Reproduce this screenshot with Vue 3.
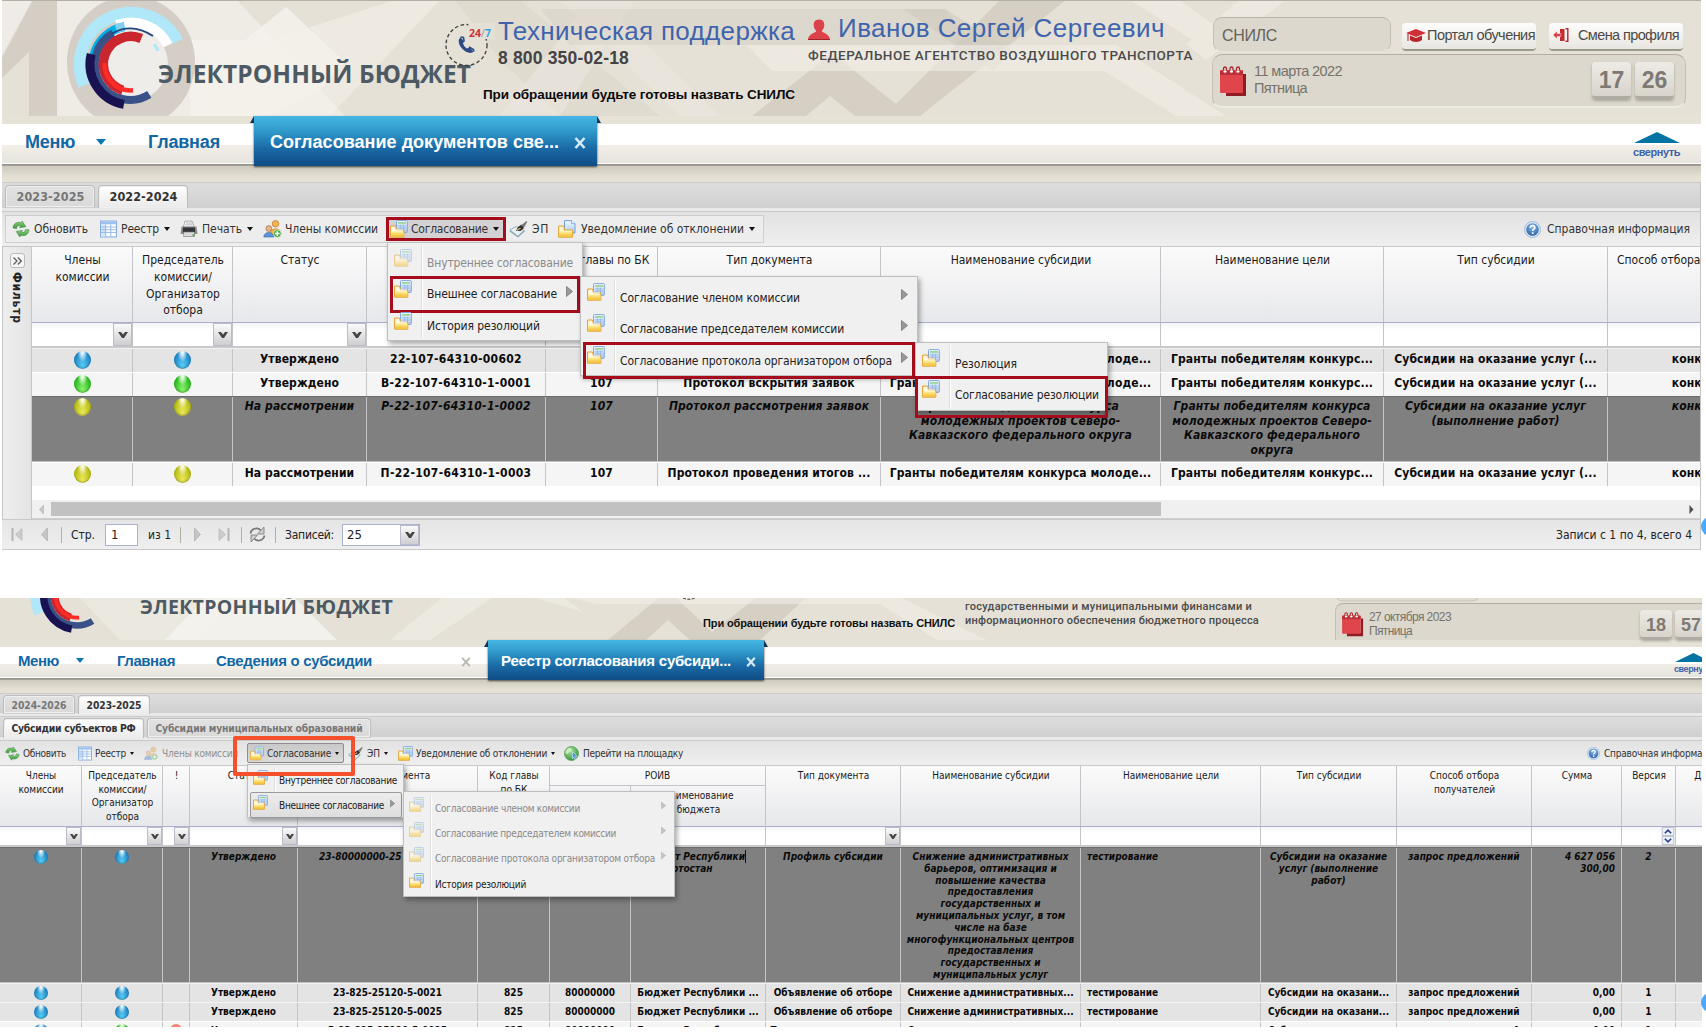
<script setup>
const vFit = {
  mounted(el, { value }) {
    const n = el.textContent.trim().length
    const w = el.getBoundingClientRect().width
    el.style.letterSpacing = ((value - w) / n).toFixed(3) + 'px'
  },
}

const toolsA = [
  { icon: 'refresh', iw: 18, label: 'Обновить', w: 54, gap: 4, after: 12 },
  { icon: 'table', iw: 17, label: 'Реестр', w: 38, gap: 4, arrow: true, after: 10 },
  { icon: 'print', iw: 18, label: 'Печать', w: 40, gap: 4, arrow: true, after: 10 },
  { icon: 'users', iw: 19, label: 'Члены комиссии', w: 93, gap: 3, after: 8 },
  { icon: 'folder', iw: 18, label: 'Согласование', w: 77, gap: 3, arrow: true, active: true, after: 3 },
  { icon: 'pen', iw: 20, label: 'ЭП', w: 17, gap: 3, after: 9 },
  { icon: 'folder2', iw: 18, label: 'Уведомление об отклонении', w: 163, gap: 5, arrow: true, after: 0 },
]
const toolsB = [
  { icon: 'refresh', iw: 15, label: 'Обновить', w: 43, gap: 3, after: 12 },
  { icon: 'table', iw: 14, label: 'Реестр', w: 31, gap: 3, arrow: true, after: 10 },
  { icon: 'users', iw: 14, label: 'Члены комиссии', w: 76, gap: 4, faded: true, after: 9 },
  { icon: 'folder', iw: 14, label: 'Согласование', w: 64, gap: 3, arrow: true, active: true, after: 4 },
  { icon: 'pen', iw: 16, label: 'ЭП', w: 13, gap: 3, arrow: true, after: 10 },
  { icon: 'folder', iw: 15, label: 'Уведомление об отклонении', w: 131, gap: 3, arrow: true, after: 9 },
  { icon: 'globe', iw: 15, label: 'Перейти на площадку', w: 100, gap: 4, after: 0 },
]

const colsA = [
  { w: 101, t: 'Члены\nкомиссии', trig: true },
  { w: 100, t: 'Председатель\nкомиссии/\nОрганизатор\nотбора', trig: true },
  { w: 134, t: 'Статус', trig: true },
  { w: 179, t: '' },
  { w: 112, t: 'Код главы по БК' },
  { w: 223, t: 'Тип документа' },
  { w: 280, t: 'Наименование субсидии' },
  { w: 223, t: 'Наименование цели' },
  { w: 224, t: 'Тип субсидии' },
  { w: 180, t: 'Способ отбора', left: true },
]
const grant = 'Гранты победителям конкурса молоде...'
const goal = 'Гранты победителям конкурс...'
const kind = 'Субсидии на оказание услуг (...'
const rowsA = [
  { cls: 'grey', balls: ['blue', 'blue'], c: ['Утверждено', '22-107-64310-00602', '107', '', grant, goal, kind, 'конкурс'] },
  { cls: 'pale', balls: ['green', 'green'], c: ['Утверждено', 'В-22-107-64310-1-0001', '107', 'Протокол вскрытия заявок', grant, goal, kind, 'конкурс'] },
  {
    cls: 'dark', balls: ['yellow', 'yellow'],
    c: ['На рассмотрении', 'Р-22-107-64310-1-0002', '107', 'Протокол рассмотрения заявок',
      'Гранты победителям конкурса\nмолодежных проектов Северо-\nКавказского федерального округа',
      'Гранты победителям конкурса\nмолодежных проектов Северо-\nКавказского федерального\nокруга',
      'Субсидии на оказание услуг\n(выполнение работ)', 'конкурс'],
  },
  { cls: 'pale', balls: ['yellow', 'yellow'], c: ['На рассмотрении', 'П-22-107-64310-1-0003', '107', 'Протокол проведения итогов ...', grant, goal, kind, 'конкурс'] },
]

const colsB = [
  { w: 82, t: 'Члены\nкомиссии', trig: true },
  { w: 81, t: 'Председатель\nкомиссии/\nОрганизатор\nотбора', trig: true },
  { w: 27, t: '!', trig: true },
  { w: 108, t: 'Статус', trig: true },
  { w: 180, t: 'Номер документа' },
  { w: 72, t: 'Код главы\nпо БК' },
  { w: 81, sub: '' },
  { w: 135, sub: 'Наименование\nбюджета' },
  { w: 135, t: 'Тип документа', trig: true },
  { w: 180, t: 'Наименование субсидии' },
  { w: 180, t: 'Наименование цели' },
  { w: 136, t: 'Тип субсидии' },
  { w: 135, t: 'Способ отбора\nполучателей' },
  { w: 90, t: 'Сумма' },
  { w: 54, t: 'Версия', spin: true },
  { w: 60, t: 'Дата' },
]
const short = ['Снижение административных...', 'тестирование', 'Субсидии на оказани...', 'запрос предложений', '0,00', '1', '']
const rowsB = [
  {
    cls: 'dark', balls: ['blue', 'blue'],
    c: ['', 'Утверждено', '23-80000000-25', '', '', 'Бюджет Республики\nБашкортостан', 'Профиль субсидии',
      'Снижение административных\nбарьеров, оптимизация и\nповышение качества\nпредоставления\nгосударственных и\nмуниципальных услуг, в том\nчисле на базе\nмногофункциональных центров\nпредоставления\nгосударственных и\nмуниципальных услуг',
      'тестирование', 'Субсидии на оказание\nуслуг (выполнение\nработ)', 'запрос предложений', '4 627 056\n300,00', '2', ''],
  },
  { cls: 'grey', balls: ['blue', 'blue'], c: ['', 'Утверждено', '23-825-25120-5-0021', '825', '80000000', 'Бюджет Республики ...', 'Объявление об отборе', ...short] },
  { cls: 'grey', balls: ['blue', 'blue'], c: ['', 'Утверждено', '23-825-25120-5-0025', '825', '80000000', 'Бюджет Республики ...', 'Объявление об отборе', ...short] },
  { cls: 'pale', balls: ['blue', 'green'], flag: true, c: ['', 'Утверждено', 'Р-23-825-25120-5-0025', '825', '80000000', 'Бюджет Республики ...', 'Протокол рассмотрения', ...short] },
]

const menusA = [
  { cls: 'a1', items: [
    { t: 'Внутреннее согласование', w: 146, off: true },
    { t: 'Внешнее согласование', w: 130, arrow: true, mark: true },
    { t: 'История резолюций', w: 113 } ] },
  { cls: 'a2', items: [
    { t: 'Согласование членом комиссии', w: 180, arrow: true },
    { t: 'Согласование председателем комиссии', w: 224, arrow: true },
    { t: 'Согласование протокола организатором отбора', w: 272, arrow: true, mark: true } ] },
  { cls: 'a3', items: [
    { t: 'Резолюция', w: 62 },
    { t: 'Согласование резолюции', w: 144, mark: true } ] },
]
const menusB = [
  { cls: 'b1', items: [
    { t: 'Внутреннее согласование', w: 118 },
    { t: 'Внешнее согласование', w: 105, arrow: true, hover: true } ] },
  { cls: 'b2', items: [
    { t: 'Согласование членом комиссии', w: 145, arrow: true, off: true },
    { t: 'Согласование председателем комиссии', w: 181, arrow: true, off: true },
    { t: 'Согласование протокола организатором отбора', w: 220, arrow: true, off: true },
    { t: 'История резолюций', w: 91 } ] },
]
</script>

<template>
  <div class="page">
    <svg class="defs" width="0" height="0" aria-hidden="true">
      <defs>
        <linearGradient id="gFold" x1="0" y1="0" x2="0" y2="1"><stop offset="0" stop-color="#fff0a0" /><stop offset="1" stop-color="#f2bb2c" /></linearGradient>
        <linearGradient id="gSheet" x1="0" y1="0" x2="0" y2="1"><stop offset="0" stop-color="#f4f9ff" /><stop offset="1" stop-color="#a9cbf3" /></linearGradient>
        <linearGradient id="gGreen" x1="0" y1="0" x2="0" y2="1"><stop offset="0" stop-color="#8fd07c" /><stop offset="1" stop-color="#3c9a3f" /></linearGradient>
        <radialGradient id="gHelp" cx=".5" cy=".3" r=".7"><stop offset="0" stop-color="#8ab8ea" /><stop offset="1" stop-color="#2f66a8" /></radialGradient>
        <radialGradient id="gGlobe" cx=".4" cy=".3" r=".8"><stop offset="0" stop-color="#a8e59a" /><stop offset="1" stop-color="#2c8a38" /></radialGradient>
      </defs>
      <symbol id="i-folder" viewBox="0 0 18 18">
        <rect x="6.500" y=".6" width="10.800" height="11.800" rx=".8" fill="url(#gSheet)" stroke="#7ea6dc" />
        <path d="M8 2.200h8v1.500H8z" fill="#8fce86" /><path d="M8 5.800h8M8 8h8M10.600 4.500v6M13.400 4.500v6" stroke="#8bb0e0" stroke-width=".7" />
        <path d="M.6 17.200V6h4.600l1 1.600V10h7.600v7.200z" fill="#fff4cc" stroke="#e0a030" />
        <path d="M1.100 16.800v-5.300h12.300v5.300z" fill="url(#gFold)" />
        <path d="M2.200 8h2.600M2.200 10h10.500" stroke="#fff" stroke-width="1.100" />
      </symbol>
      <symbol id="i-folder2" viewBox="0 0 18 18">
        <path d="M6.500.6h7l3.500 3v9.400H6.500z" fill="url(#gSheet)" stroke="#6f9ee0" /><path d="M13.500.6v3h3.500" fill="#fff" stroke="#6f9ee0" stroke-width=".8" />
        <path d="M.6 17.200V6h4.600l1 1.600V10h8.400v7.200z" fill="#fff4cc" stroke="#e0a030" />
        <path d="M1.100 16.800v-5.300h13v5.300z" fill="url(#gFold)" />
      </symbol>
      <symbol id="i-refresh" viewBox="0 0 18 17">
        <path d="M1 7.500C1 3.500 5 .8 9 2.200l1.200-1.600 3.600 5.600-6.200 1 1-2C6 4.600 4.600 5.800 4.600 8z" fill="url(#gGreen)" stroke="#3f8a45" stroke-width=".6" />
        <path d="M17 9.300c0 4-4 6.900-8 5.500l-1.200 1.700-3.600-5.600 6.200-1-1 2c2.600.5 4-.7 4-2.900z" fill="url(#gGreen)" stroke="#3f8a45" stroke-width=".6" />
      </symbol>
      <symbol id="i-table" viewBox="0 0 17 17">
        <rect x=".6" y=".6" width="15.800" height="15.800" fill="#fff" stroke="#7aa7dc" />
        <path d="M1.200 1.200h14.600v2.600H1.200z" fill="#9cc1ee" /><path d="M1.200 4h4.500v12H1.200z" fill="#d5e6fa" />
        <path d="M1 6.500h15M1 9.200h15M1 11.900h15M5.700 4v12M10.800 4v12" stroke="#8db4e3" stroke-width=".9" />
      </symbol>
      <symbol id="i-print" viewBox="0 0 18 17">
        <path d="M5 .6h7l2.400 6H3.400z" fill="#fdfdfd" stroke="#888" stroke-width=".7" /><path d="M6 2.500h6M5.600 4.300h7" stroke="#999" stroke-width=".7" />
        <path d="M1.500 6h15l1 7.500H.6z" fill="#8a8a8a" /><path d="M3 7h12v6H3z" fill="#2f3236" /><path d="M3.600 11.500h11v4.500H3.600z" fill="#d9d9d9" stroke="#777" stroke-width=".6" /><path d="M12.500 13.500h2v2h-2z" fill="#62b04a" />
      </symbol>
      <symbol id="i-users" viewBox="0 0 19 18">
        <circle cx="12.500" cy="3.800" r="3.300" fill="#f1b253" stroke="#c07c24" stroke-width=".7" /><path d="M7.500 13c0-5 10-6 10.500 0v1.500H7.500z" fill="#f3b13a" stroke="#ba7a1c" stroke-width=".6" />
        <circle cx="5.800" cy="8.500" r="2.900" fill="#e9b489" stroke="#a56b3c" stroke-width=".7" /><path d="M.8 17c0-6 9.500-6 10 0z" fill="#5d94dc" stroke="#3467a8" stroke-width=".6" />
        <circle cx="14.300" cy="13.600" r="3.900" fill="#4fa94a" stroke="#e8f6e4" stroke-width=".7" /><path d="M14.300 11.300v4.600M12 13.600h4.600" stroke="#fff" stroke-width="1.500" />
      </symbol>
      <symbol id="i-pen" viewBox="0 0 20 17">
        <path d="M.8 9.500L7 6l8 4-6 6z" fill="#e8f2f4" stroke="#8fb0b8" /><path d="M1 10.500l8 5.800 6.500-6" fill="none" stroke="#86a6ae" stroke-width="1.200" />
        <path d="M7 10.500l2-4 3.500-2.500 2.500 3.500-3.500 3z" fill="#2c2c30" /><path d="M12 5L17.500.5l.8.8L15 7z" fill="#777" /><path d="M8 10l3.500-2.500" stroke="#f3c36a" stroke-width="1.300" />
      </symbol>
      <symbol id="i-globe" viewBox="0 0 16 16">
        <circle cx="8" cy="8" r="7.500" fill="url(#gGlobe)" stroke="#4b9a4e" stroke-width=".7" /><path d="M5 2c3 0 4 1 3 3s-3 1-4 3-2 0-2.600-1C2 4 3 3 5 2z" fill="#d6f4ca" opacity=".8" />
        <path d="M9 6l5 5-2 .4 1.400 2.400-1.800.8-1.300-2.500L9 13.500z" fill="#4b93d8" stroke="#e5f2ff" stroke-width=".6" />
      </symbol>
      <symbol id="i-help" viewBox="0 0 16 16">
        <circle cx="8" cy="8" r="7.500" fill="#dbe8f7" stroke="#8fb0d8" stroke-width=".8" /><circle cx="8" cy="8" r="5.900" fill="url(#gHelp)" />
        <path d="M5.900 6.300C6 3.500 10.300 3.700 10.200 6.200 10.100 7.700 8.200 7.700 8.200 9.300M8.200 10.600v1.600" fill="none" stroke="#fff" stroke-width="1.600" />
      </symbol>
      <symbol id="i-cal" viewBox="0 0 27 31">
        <path d="M4 8h22v22H6v-4h17V8z" fill="#8e1d25" /><rect y="4" width="23" height="23" rx="1" fill="#e0454c" />
        <path d="M0 5h3v3h4V5h2v3h4V5h2v3h4V5h4v4H0z" fill="#b92f38" />
        <path d="M3.500 8V2.500a1.500 1.500 0 013 0V8M10 8V2.500a1.500 1.500 0 013 0V8M16.500 8V2.500a1.500 1.500 0 013 0V8" fill="none" stroke="#a5262f" stroke-width="1.300" />
        <path d="M3.500 5.500h3M10 5.500h3M16.500 5.500h3" stroke="#fff" stroke-width="2" />
      </symbol>
      <symbol id="i-logo" viewBox="0 0 130 116">
        <g fill="none">
          <path d="M18.200 85.400A51.500 51.500 0 01111.300 41.400" stroke="#b0e8f9" stroke-width="12" />
          <path d="M50.800 25A41.500 41.500 0 01102 45.200" stroke="#fff" stroke-width="10" />
          <path d="M92 51A29 29 0 0088 44" stroke="#b0e8f9" stroke-width="3" />
          <path d="M28 55.500A38 38 0 0158.400 26.600" stroke="#00aee6" stroke-width="9" />
          <path d="M50 28.500A38 38 0 0158.400 26.600" stroke="#7fd0ee" stroke-width="9" />
          <path d="M47.200 33.300A35.500 35.500 0 1083.300 94.400" stroke="#3a5188" stroke-width="8" />
          <path d="M25.200 54.100A41 41 0 0057.900 104.400" stroke="#181253" stroke-width="9" />
          <path d="M75.300 38.500A27.500 27.500 0 1056.700 90.200" stroke="#ca262d" stroke-width="9.500" />
          <path d="M38.500 63A26.500 26.500 0 0067 90.300" stroke="#fe2b27" stroke-width="4.500" />
          <path d="M46 33.500Q66 22 87 36" stroke="#25457f" stroke-width="1.800" />
        </g>
      </symbol>
      <symbol id="i-prev" viewBox="0 0 6 11"><path d="M5.500 0v11L.5 5.500z" fill="#c6c6c6" stroke="#aaa" stroke-width=".6" /></symbol>
      <symbol id="i-next" viewBox="0 0 6 11"><path d="M.5 0v11l5-5.500z" fill="#c6c6c6" stroke="#aaa" stroke-width=".6" /></symbol>
    </svg>

    <!-- first window -->
    <section class="win a">
      <header class="head">
        <svg class="pattern" width="1699" height="116" viewBox="2 0 1699 116">
          <rect x="2" width="1699" height="116" fill="#e5e1d6" />
          <path d="M57 0h180L345 116H57z" fill="#f1eeea" opacity=".75" />
          <path d="M2 0h30L2 55z" fill="#f1eeea" opacity=".8" />
          <path d="M33 0h24v116H29V52L2 78V58z" fill="#d4cec5" />
          <path d="M286 7L345 62 320 90 270 116H190V40h55z" fill="#f5f3ee" opacity=".8" />
          <path d="M330 116L440 0h-45L195 64v52z" fill="#f3f0ea" opacity=".6" />
          <path d="M455 0h65l140 116H560L500 60z" fill="#dcd7cb" opacity=".55" />
          <path d="M500 116L590 0h45L560 116zM560 0h40l120 116h-40z" fill="#efece4" opacity=".45" />
          <path d="M540 9H945l30 36H570z" fill="#d7d2c6" opacity=".55" />
          <path d="M752 116l80-63 64 51L1000 0h66L920 116h-65l-25-20-24 20z" fill="#d0cabe" opacity=".75" />
          <path d="M945 9l68 42-20 20-90-62z" fill="#d0cabe" opacity=".6" />
          <path d="M747 45h369l110 71h-50l-72-45H772z" fill="#f1eee7" opacity=".6" />
          <path d="M1130 0h50l60 45-27 8zM1240 0h46l-80 60-20-16z" fill="#f1eee7" opacity=".6" />
          <ellipse cx="131" cy="62" rx="64" ry="66" fill="#d4cec6" /><circle cx="131" cy="64" r="37" fill="#efedea" />
          <path d="M2 .5h1699" stroke="#b4b0a8" />
        </svg>
        <div class="brand"><svg class="logo" width="130" height="116"><use href="#i-logo" /></svg><span v-fit="313" class="title">ЭЛЕКТРОННЫЙ БЮДЖЕТ</span></div>
        <div class="phone">
          <svg width="50" height="44" viewBox="0 0 50 44">
            <circle cx="21.500" cy="22" r="20.500" fill="none" stroke="#3c3c3c" stroke-width="1.300" stroke-dasharray="3.500 2.500" />
            <path d="M23 0h27v16H26z" fill="#e4e0d5" />
            <path d="M15.500 14.500c-3 2-2 7 1.500 11s9 6 11.500 3l-4-4-2.500 1c-2-1-3.500-3-4-5.500l1.500-1.500z" fill="#2e4a86" />
            <path d="M15.500 14l3 .5.700 4M24 24l4.500 2.500.5 2" stroke="#2e4a86" stroke-width="1.500" fill="none" />
          </svg>
          <b class="t247"><i>24</i><s>/</s><u>7</u></b>
        </div>
        <div class="support">
          <div class="big"><span v-fit="297">Техническая поддержка</span></div>
          <div class="tel"><span v-fit="131">8 800 350-02-18</span></div>
          <div class="note"><span v-fit="312">При обращении будьте готовы назвать СНИЛС</span></div>
        </div>
        <div class="user">
          <div class="big"><svg width="22" height="21" viewBox="0 0 22 21"><path d="M11 .5c4 0 5.500 2.800 5.300 6-.2 2.500-1.300 4-2.500 5.500 0 2 7.200 2 8.200 8.500H0C1 14 8.200 14 8.200 12 7 10.500 5.900 9 5.700 6.500 5.500 3.300 7 .5 11 .5z" fill="#dd424a" /><path d="M0 20.500h22" stroke="#9f2129" /></svg><span v-fit="327">Иванов Сергей Сергеевич</span></div>
          <div class="org"><span v-fit="385">ФЕДЕРАЛЬНОЕ АГЕНТСТВО ВОЗДУШНОГО ТРАНСПОРТА</span></div>
        </div>
        <div class="side">
          <div class="row1">
            <div class="snils"><span v-fit="55">СНИЛС</span></div>
            <div class="btn b-l"><svg width="20" height="13" viewBox="0 0 20 13"><path d="M10 0l10 4-10 4L0 4z" fill="#cf2f36" /><path d="M4 6.500l6 2.500 6-2.500V11c-3 2.500-9 2.500-12 0z" fill="#b5262d" /><path d="M2 5v7" stroke="#c33" stroke-width="1.200" /></svg><span v-fit="108">Портал обучения</span></div>
            <div class="btn b-r"><svg width="16" height="14" viewBox="0 0 16 14"><path d="M7 1h4.500v12H7z" fill="#c62a31" /><path d="M14.800 0v14M12.500 1.200l2 -1M12.500 12.800l2 1" stroke="#b5262d" stroke-width="1.400" /><path d="M0 7l4-4v2.500h4v3H4V11z" fill="#dd424a" stroke="#fff" stroke-width=".4" /></svg><span v-fit="101">Смена профиля</span></div>
          </div>
          <div class="clock">
            <svg class="cal" width="27" height="31"><use href="#i-cal" /></svg>
            <div class="date"><span v-fit="88">11 марта 2022</span><span v-fit="53">Пятница</span></div>
            <b class="tile">17</b><b class="tile">26</b>
          </div>
        </div>
      </header>
      <nav class="nav">
        <span v-fit="50" class="m1">Меню</span><i class="down"></i><span v-fit="72" class="m2">Главная</span>
        <div class="cur"><span v-fit="289">Согласование документов све...</span><svg width="12" height="12" viewBox="0 0 12 12"><path d="M1.500 1l9 10M10.500 1l-9 10" stroke="#d5ecf7" stroke-width="2.600" /></svg></div>
        <div class="fold"><svg width="46" height="11" viewBox="0 0 46 11"><path d="M23 0l23 11H0z" fill="#0673a5" /></svg><span v-fit="47">свернуть</span></div>
      </nav>
      <div class="shade"></div>
      <div class="tabs"><div class="tab"><span v-fit="68">2023-2025</span></div><div class="tab on"><span v-fit="68">2022-2024</span></div></div>
      <div class="bar">
        <div class="tools">
          <div v-for="t in toolsA" :key="t.label" class="tool" :class="{ active: t.active }" :style="{ marginRight: t.after + 'px' }">
            <svg :width="t.iw" height="18"><use :href="'#i-' + t.icon" /></svg>
            <span v-fit="t.w" :style="{ marginLeft: t.gap + 'px' }">{{ t.label }}</span><i v-if="t.arrow" class="arr"></i>
          </div>
        </div>
        <div class="help"><svg width="17" height="17"><use href="#i-help" /></svg><span v-fit="143">Справочная информация</span></div>
      </div>
      <div class="body">
        <aside class="filter"><div class="exp"><svg width="9" height="8" viewBox="0 0 9 8"><path d="M.5.500L4 4 .5 7.500M4.800.500L8.300 4 4.800 7.500" fill="none" stroke="#555" stroke-width="1.200" /></svg></div><b>Фильтр</b></aside>
        <div class="grid">
          <div class="line hd"><div v-for="(c, i) in colsA" :key="i" class="cell" :class="{ left: c.left }" :style="{ width: c.w + 'px' }">{{ c.t }}</div></div>
          <div class="line fl"><div v-for="(c, i) in colsA" :key="i" class="cell" :style="{ width: c.w + 'px' }"><div v-if="c.trig" class="trig"><svg viewBox="0 0 10 8"><path d="M0 1h3l2 2.500L7 1h3L6 7H4z" fill="#444" /></svg></div></div></div>
          <div v-for="(r, k) in rowsA" :key="k" class="line rw" :class="r.cls">
            <div v-for="(b, i) in r.balls" :key="'b' + i" class="cell" :style="{ width: colsA[i].w + 'px' }"><i class="ball" :class="b"></i></div>
            <div v-for="(t, i) in r.c" :key="i" class="cell" :class="'c' + i" :style="{ width: colsA[i + 2].w + 'px' }">{{ t }}</div>
          </div>
          <div class="scroll"><svg width="5" height="9" viewBox="0 0 6 11"><use href="#i-prev" /></svg><div class="thumb"></div><svg width="5" height="9" viewBox="0 0 6 11"><path d="M.5 0v11l5-5.500z" fill="#505050" /></svg></div>
        </div>
      </div>
      <footer class="pager">
        <svg class="first" width="12" height="13" viewBox="0 0 12 13"><path d="M1.500 0v13" stroke="#b5b5b5" stroke-width="2" /><path d="M11 .5v12L4.500 6.500z" fill="#ccc" stroke="#b0b0b0" stroke-width=".6" /></svg>
        <svg class="prev" width="7" height="13"><use href="#i-prev" /></svg><i class="sep s1"></i>
        <span v-fit="24" class="p1">Стр.</span><div class="inp">1</div><span v-fit="23" class="p2">из 1</span><i class="sep s2"></i>
        <svg class="next" width="7" height="13"><use href="#i-next" /></svg>
        <svg class="last" width="12" height="13" viewBox="0 0 12 13"><path d="M10.500 0v13" stroke="#b5b5b5" stroke-width="2" /><path d="M1 .5v12l6.500-6z" fill="#ccc" stroke="#b0b0b0" stroke-width=".6" /></svg><i class="sep s3"></i>
        <svg class="rel" width="17" height="17" viewBox="0 0 17 17"><g fill="none" stroke="#777" stroke-width="1.700"><path d="M1.500 7.500C2 3 8 .5 12 4.500" /><path d="M15.500 9.500c-.5 4.500-6.500 7-10.500 3" /></g><path d="M15 1v7H8.500zM2 16V9h6.500z" fill="#d0d0d0" stroke="#777" stroke-width=".8" /></svg><i class="sep s4"></i>
        <span v-fit="49" class="p3">Записей:</span><div class="sel"><span>25</span><div class="trig"><svg viewBox="0 0 10 8"><path d="M0 1h3l2 2.500L7 1h3L6 7H4z" fill="#444" /></svg></div></div>
        <span v-fit="136" class="total">Записи с 1 по 4, всего 4</span>
      </footer>
      <div v-for="m in menusA" :key="m.cls" class="menu" :class="m.cls">
        <div v-for="it in m.items" :key="it.t" class="mi" :class="{ off: it.off, mark: it.mark }">
          <svg class="mic" width="18" height="18"><use href="#i-folder" /></svg><span v-fit="it.w">{{ it.t }}</span>
          <svg v-if="it.arrow" class="sub" viewBox="0 0 7 11"><path d="M.5.500v10l6-5z" fill="#999" stroke="#777" stroke-width=".8" /></svg>
        </div>
      </div>
    </section>
    <i class="dot d1"></i>

    <!-- second window -->
    <section class="win b">
      <header class="head">
        <svg class="pattern" width="1702" height="42" viewBox="0 0 1702 42">
          <rect width="1702" height="42" fill="#e5e1d6" />
          <path d="M80 0h155l-40 42H120z" fill="#efece6" opacity=".6" />
          <path d="M205 0h90l42 42H165z" fill="#f7f5f1" opacity=".75" /><path d="M390 42l52-42h50L430 42zM535 0h30l18 14z" fill="#f0ede6" opacity=".7" />
          <path d="M608 42l60-50 44 42L756 0h50l-46 42h-70l-22-20-22 20z" fill="#d0cabe" opacity=".75" />
          <path d="M572 0h330l85 42h-50L880 6H596z" fill="#f1eee7" opacity=".6" />
          <path d="M683 0q6 2.500 12 0" stroke="#333" fill="none" stroke-dasharray="3 1.500" />
          <path d="M1337 0q1 3 8 3h125q7 0 8-3" fill="#e0dcd1" stroke="#c9c4b8" />
        </svg>
        <div class="brand"><svg class="logo" width="107" height="96" viewBox="0 0 130 116"><use href="#i-logo" /></svg><span v-fit="253" class="title">ЭЛЕКТРОННЫЙ БЮДЖЕТ</span></div>
        <div class="note"><span v-fit="252">При обращении будьте готовы назвать СНИЛС</span></div>
        <div class="org2"><span v-fit="287">государственными и муниципальными финансами и</span><span v-fit="294">информационного обеспечения бюджетного процесса</span></div>
        <div class="clock">
          <svg class="cal" width="22" height="25" viewBox="0 0 27 31"><use href="#i-cal" /></svg>
          <div class="date"><span v-fit="82">27 октября 2023</span><span v-fit="43">Пятница</span></div>
          <b class="tile">18</b><b class="tile">57</b>
        </div>
      </header>
      <nav class="nav">
        <span v-fit="41" class="m1">Меню</span><i class="down"></i><span v-fit="58" class="m2">Главная</span><span v-fit="156" class="m3">Сведения о субсидии</span>
        <svg class="mx" width="10" height="10" viewBox="0 0 12 12"><path d="M1.500 1l9 10M10.500 1l-9 10" stroke="#b9b6b0" stroke-width="2.200" /></svg>
        <div class="cur"><span v-fit="230">Реестр согласования субсиди...</span><svg width="10" height="10" viewBox="0 0 12 12"><path d="M1.500 1l9 10M10.500 1l-9 10" stroke="#d5ecf7" stroke-width="2.600" /></svg></div>
        <div class="fold"><svg width="37" height="9" viewBox="0 0 46 11"><path d="M23 0l23 11H0z" fill="#0673a5" /></svg><span v-fit="38">свернуть</span></div>
      </nav>
      <div class="shade"></div>
      <div class="tabs"><div class="tab"><span v-fit="55">2024-2026</span></div><div class="tab on"><span v-fit="55">2023-2025</span></div></div>
      <div class="tabs second"><div class="tab on"><span v-fit="124">Субсидии субъектов РФ</span></div><div class="tab"><span v-fit="207">Субсидии муниципальных образований</span></div></div>
      <div class="bar">
        <div class="tools">
          <div v-for="t in toolsB" :key="t.label" class="tool" :class="{ active: t.active, faded: t.faded }" :style="{ marginRight: t.after + 'px' }">
            <svg :width="t.iw" height="15"><use :href="'#i-' + t.icon" /></svg>
            <span v-fit="t.w" :style="{ marginLeft: t.gap + 'px' }">{{ t.label }}</span><i v-if="t.arrow" class="arr"></i>
          </div>
        </div>
        <div class="help"><svg width="13" height="13"><use href="#i-help" /></svg><span v-fit="115">Справочная информация</span></div>
      </div>
      <div class="grid">
        <div class="line hd">
          <template v-for="(c, i) in colsB" :key="i">
            <div v-if="i === 6" class="group" :style="{ width: c.w + colsB[7].w + 'px' }">
              <div class="gt">РОИВ</div>
              <div class="line"><div class="cell" :style="{ width: c.w + 'px' }">{{ c.sub }}</div><div class="cell" :style="{ width: colsB[7].w + 'px' }">{{ colsB[7].sub }}</div></div>
            </div>
            <div v-else-if="i !== 7" class="cell" :style="{ width: c.w + 'px' }">{{ c.t }}</div>
          </template>
        </div>
        <div class="line fl"><div v-for="(c, i) in colsB" :key="i" class="cell" :style="{ width: c.w + 'px' }">
          <div v-if="c.trig" class="trig"><svg viewBox="0 0 10 8"><path d="M0 1h3l2 2.500L7 1h3L6 7H4z" fill="#444" /></svg></div>
          <div v-if="c.spin" class="spin"><svg viewBox="0 0 14 20"><path d="M.5.500h13v9H.5zM.5 10.500h13v9H.5z" fill="#eef1f8" stroke="#b5b8c8" /><path d="M3.500 7L7 3.500 10.500 7M3.500 13L7 16.500l3.500-3.500" fill="none" stroke="#27408b" stroke-width="1.800" /></svg></div>
        </div></div>
        <div v-for="(r, k) in rowsB" :key="k" class="line rw" :class="r.cls">
          <div v-for="(b, i) in r.balls" :key="'b' + i" class="cell" :style="{ width: colsB[i].w + 'px' }"><i class="ball" :class="b"></i></div>
          <div v-for="(t, i) in r.c" :key="i" class="cell" :class="'c' + i" :style="{ width: colsB[i + 2].w + 'px' }"><i v-if="r.flag && i === 0" class="flag"></i>{{ t }}</div>
        </div>
      </div>
      <i class="caret"></i>
      <div v-for="m in menusB" :key="m.cls" class="menu" :class="m.cls">
        <div v-for="it in m.items" :key="it.t" class="mi" :class="{ off: it.off, hover: it.hover }">
          <svg class="mic" width="15" height="15"><use href="#i-folder" /></svg><span v-fit="it.w">{{ it.t }}</span>
          <svg v-if="it.arrow" class="sub" viewBox="0 0 7 11"><path d="M.5.500v10l6-5z" fill="#999" stroke="#777" stroke-width=".8" /></svg>
        </div>
      </div>
      <div class="callout"></div>
    </section>
    <i class="dot d2"></i>
  </div>
</template>

<style>
body { background: #fff; overflow: hidden; }
</style>

<style scoped>
.page { position: relative; width: 1706px; height: 1032px; overflow: hidden; background: #fff; font-family: "DejaVu Sans Condensed", "Noto Sans", sans-serif; color: #222; }
.page * { box-sizing: border-box; }
.defs { position: absolute; }
span { white-space: nowrap; }
svg { display: block; flex: none; }
.win { position: relative; overflow: hidden; display: flex; flex-direction: column; }
.a { width: 1699px; height: 550px; margin-left: 2px; margin-bottom: 48px; border-bottom: 1px solid #c8c8c8; font-size: 12px; }
.b { width: 1702px; height: 429px; font-size: 10px; }
.a::after { content: ""; position: absolute; right: 0; top: 182px; bottom: 0; width: 1px; background: #c4c4c4; }

/* header */
.head { position: relative; display: flex; flex: none; font-family: "Liberation Sans", Arial, sans-serif; }
.a .head { height: 124px; background: #e6e2d6; }
.b .head { height: 49px; background: #e6e2d6; }
.pattern { position: absolute; left: 0; top: 0; }
.head > div { position: relative; flex: none; }
.brand { display: flex; }
.title { font-family: "Open Sans", sans-serif; font-weight: 700; color: #4d5a63; position: relative; }
.a .brand { width: 442px; padding-left: 64px; }
.a .title { font-size: 24.500px; line-height: 34px; margin: 57px 0 0 -38px; }
.a .phone { width: 54px; padding: 23px 0 0 1px; display: flex; }
.t247 { font: bold 10.500px/12px "Open Sans", sans-serif; margin: 4px 0 0 -26px; white-space: nowrap; position: relative; }
.t247 i { color: #cf3038; font-style: normal; } .t247 s { color: #999; text-decoration: none; font-weight: 400; } .t247 u { color: #35a4dc; text-decoration: none; }
.support { width: 310px; }
.big { display: flex; font-size: 26px; line-height: 30px; color: #3f64ad; }
.support .big { padding: 16px 0 0 0; }
.tel { font-weight: bold; font-size: 17.500px; line-height: 20px; color: #444; margin-top: 2px; }
.a .note { font-weight: bold; font-size: 13.500px; line-height: 16px; color: #0a0a0a; margin: 19px 0 0 -15px; }
.user { width: 405px; }
.user .big { padding-top: 13px; gap: 8px; } .user .big svg { margin-top: 6px; }
.org { font: 500 13.500px/16px Roboto, sans-serif; color: #4a4a4a; margin-top: 4px; }
.side { width: 486px; padding-top: 17px; margin-left: -1px; }
.row1 { display: flex; align-items: flex-start; }
.snils { width: 178px; height: 35px; border-radius: 9px; background: #dcd8cd; border: 1px solid #c5c0b4; border-top-color: #b8b3a8; border-bottom-color: #e9e6de; padding: 8px 0 0 8px; font-size: 16px; line-height: 19px; color: #666259; margin-left: 1px; }
.btn { width: 134px; height: 28px; border-radius: 4px; background: linear-gradient(#fdfdfc, #e8e6e1); border-bottom: 2px solid #9c998f; display: flex; align-items: center; font-size: 14.500px; color: #4c4a46; margin-top: 6px; padding-bottom: 2px; }
.b-l { margin-left: 11px; padding-left: 4px; gap: 1px; } .b-r { margin-left: 13px; padding-left: 4px; gap: 9px; }
.clock { display: flex; background: #dcd8cd; border: 1px solid #c5c0b4; border-top-color: #b3aea3; color: #77736a; }
.side .clock { width: 474px; height: 54px; margin-top: 2px; border-radius: 10px; border-bottom: 2px solid #eeebe4; padding-left: 7px; }
.side .cal { margin-top: 11px; }
.date { display: flex; flex-direction: column; align-items: flex-start; }
.side .date { font-size: 14.500px; line-height: 17px; margin: 8px 0 0 7px; width: 338px; }
.tile { background: linear-gradient(#eeebe6, #d8d4cc); border-radius: 4px; border-bottom: 3px solid #b0aca3; box-shadow: 0 2px 3px #a9a59a; text-align: center; color: #7e7a73; flex: none; }
.side .tile { width: 39px; height: 37px; margin: 7px 4px 0 0; font-size: 23px; line-height: 37px; }

/* navigation */
.nav { position: relative; display: flex; flex: none; font-family: "Liberation Sans", Arial, sans-serif; font-weight: bold; color: #1167a5; }
.a .nav { height: 42px; background: linear-gradient(#fff 0 21px, #f2eee7 21px, #e6e4df 39px, #fff 39px 40px, #8f8c86 40px, #a9a69d 42px); font-size: 18px; line-height: 36px; padding-left: 23px; }
.b .nav { height: 33px; background: linear-gradient(#fff 0 17px, #f2eee7 17px, #e6e4df 30px, #fff 30px 31px, #8f8c86 31px, #a9a69d 33px); font-size: 15px; line-height: 27px; padding-left: 18px; }
.down { border: 5px solid transparent; border-top: 6px solid #0b77b3; border-bottom: 0; height: 0; }
.a .down { margin: 15px 42px 0 21px; } .b .down { margin: 11px 33px 0 17px; border-width: 5px 4.500px 0; }
.b .m3 { margin-left: 41px; } .mx { margin: 10px 17px 0 89px; }
.cur { position: relative; background: linear-gradient(#45b7e3, #3099cb 30%, #1a6aa6 65%, #0f4c85); color: #fff; display: flex; box-shadow: 0 1px 2px #444; }
.a .cur { margin: -8px 0 0 34px; width: 343px; height: 50px; padding: 8px 0 0 16px; }
.a .cur svg { margin: 13px 0 0 15px; }
.b .cur { margin-top: -7px; width: 276px; height: 40px; padding: 7px 0 0 13px; }
.b .cur svg { margin: 10px 0 0 15px; }
.cur::before, .cur::after { content: ""; position: absolute; top: 0; border-bottom: 7px solid #12335c; }
.cur::before { left: -4px; border-left: 4px solid transparent; } .cur::after { right: -4px; border-right: 4px solid transparent; }
.fold { display: flex; flex-direction: column; align-items: center; color: #3c62a8; margin-left: auto; }
.a .fold { margin: 8px 21px 0 auto; font-size: 11px; line-height: 18px; }
.b .fold { margin: 6px -10px 0 auto; font-size: 9px; line-height: 15px; }
.shade { flex: none; background: linear-gradient(#cfcabd, #e4e0d4 70%, #e6e2d6); }
.a .shade { height: 16px; } .b .shade { height: 13px; }

/* tabs */
.tabs { flex: none; display: flex; font-weight: bold; background: linear-gradient(#dedede, #d0d0d0); color: #777; }
.a .tabs { height: 29px; border-bottom: 3px solid #e9e9e9; box-shadow: inset 0 1px #cbcbcb; padding: 3px 0 0 3px; gap: 3px; }
.tab { border: 1px solid #bcbcbc; border-bottom-color: #cfcfcf; border-radius: 4px 4px 0 0; background: linear-gradient(#e2e2e2, #d9d9d9); box-shadow: inset 0 0 0 1px #eee; display: flex; justify-content: center; }
.tab.on { background: linear-gradient(#fff, #eaeaea); color: #333; border-bottom: 0; }
.a .tab { width: 90px; height: 23px; font-size: 12.500px; line-height: 22px; padding-left: 1px; }
.b .tabs { height: 23px; border-bottom: 3px solid #e9e9e9; padding: 2px 0 0 3px; gap: 3px; box-shadow: inset 0 1px #cbcbcb; }
.b .tabs.second { height: 24px; }
.b .tab { width: 72px; height: 19px; font-size: 10.300px; line-height: 19px; }
.b .second .tab { width: 141px; height: 20px; } .b .second .tab + .tab { width: 224px; }

/* toolbar */
.bar { flex: none; display: flex; justify-content: space-between; background: linear-gradient(#e2e2e2, #efefef); border-top: 1px solid #c9c9c9; color: #333; }
.tools, .tool, .help { display: flex; align-items: center; }
.a .bar { height: 35px; padding: 3px 11px 3px 3px; }
.a .tools { border: 1px solid #cfcfcf; background: #ededed; height: 28px; padding-left: 6px; width: 759px; }
.a .tool { height: 24px; } .b .tool { height: 20px; }
.arr { border: 3px solid transparent; border-top: 4px solid #111; border-bottom: 0; margin-left: 5px; }
.b .arr { border-width: 3px 2.500px 0; margin-left: 4px; }
.a .tool.active { border: 3px solid #a50d1c; background: #d3d1d3; padding: 0 3px 0 1px; width: 120px; flex: none; }
.b .bar { height: 25px; padding: 0 0 0 5px; }
.b .tool.active { border: 1px solid #8d8d8d; border-radius: 2px; background: linear-gradient(#c9c9c9, #dadada); padding: 0 3px 0 2px; width: 97px; }
.b .tool { flex: none; }
.faded { opacity: .5; }
.help { gap: 6px; } .b .help { gap: 4px; margin-right: -17px; }

/* grid */
.body { display: flex; flex: none; height: 273px; }
.filter { width: 30px; background: linear-gradient(90deg, #eee, #e4e4e4); border: 1px solid #c6c6c6; border-width: 1px 1px 0; display: flex; flex-direction: column; align-items: center; flex: none; }
.exp { width: 15px; height: 15px; border: 1px solid #bbb; border-radius: 3px; background: #f6f6f6; margin: 6px 0 4px 0; display: flex; align-items: center; justify-content: center; flex: none; }
.filter b { writing-mode: vertical-rl; font-size: 12px; letter-spacing: .8px; }
.grid { position: relative; background: #fff; overflow: hidden; flex: 1; }
.line { display: flex; }
.cell { flex: none; border-right: 1px solid #c4c4c8; white-space: pre; text-align: center; overflow: hidden; }
.hd { background: linear-gradient(#fbfbfb, #e7e8eb); border-top: 1px solid #c9c9c9; border-bottom: 1px solid #aeaecb; color: #1a1a1a; }
.a .hd { height: 77px; line-height: 16.800px; } .a .hd .cell { padding: 5px 0 0 1px; }
.a .hd .left { text-align: left; padding-left: 9px; }
.fl { background: linear-gradient(#f1f5f7, #fff 30%); border-bottom: 2px solid #c9c9c9; }
.a .fl { height: 25px; } .fl .cell { display: flex; justify-content: flex-end; }
.trig { border: 1px solid #b9bccb; background: linear-gradient(#fafafa, #cfcfd2); display: flex; align-items: center; justify-content: center; flex: none; }
.a .trig { width: 19px; } .a .trig svg { width: 10px; height: 8px; }
.b .trig { width: 15px; } .b .trig svg { width: 8px; height: 7px; }
.rw { font-weight: bold; color: #0a0a0a; }
.rw.grey { background: #e4e4e4; border-top: 1px solid #f2f2f2; } .rw.pale { background: #f5f5f5; border-top: 1px solid #fff; }
.rw.dark { background: #808080; font-style: italic; border-bottom: 1px solid #c2c2c2; border-top: 1px solid #6d6d6d; }
.a .rw { height: 24px; line-height: 14.500px; letter-spacing: .1px; } .a .rw .cell { padding-top: 3px; }
.a .rw .c1 { letter-spacing: .32px; }
.a .rw.dark { height: 66px; } .a .rw.dark .cell { padding-top: 2px; }
.ball { display: block; margin: 0 auto; border-radius: 50%; box-shadow: inset 0 -1px 2px rgba(0, 0, 0, .25); }
.a .ball { width: 17px; height: 18px; margin-top: -1px; } .b .ball { width: 14px; height: 14px; }
.blue { background: radial-gradient(ellipse at 50% 5%, #eaf6fd 8%, transparent 42%), radial-gradient(ellipse at 50% 80%, #58cdf5, #1c82c4 75%); }
.green { background: radial-gradient(ellipse at 50% 5%, #edffe6 8%, transparent 42%), radial-gradient(ellipse at 50% 80%, #8df06a, #22b91c 75%); }
.yellow { background: radial-gradient(ellipse at 50% 5%, #fbfbdc 8%, transparent 42%), radial-gradient(ellipse at 50% 80%, #ece85a, #b5bb10 75%); }
.scroll { position: absolute; left: 0; right: 0; bottom: 0; height: 19px; background: #f0f0f0; border-bottom: 1px solid #cfcfcf; display: flex; align-items: center; padding: 0 7px 0 7px; }
.thumb { width: 1110px; height: 14px; background: #c1c1c1; margin: 0 auto 0 7px; }

.b .grid { flex: none; }
.b .hd { height: 62px; line-height: 13.500px; } .b .hd .cell { padding: 3px 0 0 1px; }
.group { flex: none; text-align: center; } .gt { height: 20px; padding-top: 3px; border-right: 1px solid #c4c4c8; border-bottom: 1px solid #c4c4c8; }
.group .cell { height: 41px; }
.b .fl { height: 20px; } .spin svg { width: 14px; height: 18px; }
.b .rw { height: 19px; line-height: 11.800px; } .b .rw .cell { padding-top: 3px; }
.b .rw.dark { height: 136px; } .b .rw .ball { margin-top: -1px; }
.b .rw .c8 { text-align: left; padding-left: 6px; } .b .rw .c11 { text-align: right; padding-right: 6px; }
.b .dark .c2 { text-align: left; padding-left: 21px; } .b .dark .c5 { text-align: left; padding-left: 6px; }
.b .rw .flag { display: block; width: 12px; height: 12px; border: 3px solid #ee8472; border-radius: 50%; margin: -1px auto 0; }
.caret { position: absolute; left: 745px; top: 252px; width: 1px; height: 13px; background: #111; }

/* pager */
.pager { flex: none; height: 30px; display: flex; align-items: center; background: linear-gradient(#e5e5e5, #efefef); padding: 0 9px; color: #222; border-top: 1px solid #c9c9c9; }
.prev { margin-left: 18px; } .sep { width: 1px; height: 16px; background: #b5b0a0; }
.s1 { margin: 0 9px 0 13px; } .inp { width: 33px; height: 22px; border: 1px solid #a9b2cc; background: #fff; margin: 0 10px; padding-left: 5px; line-height: 20px; font-size: 13px; }
.s2 { margin: 0 13px 0 9px; } .last { margin-left: 17px; } .s3 { margin: 0 7px 0 11px; } .s4 { margin: 0 9px 0 9px; }
.sel { width: 78px; height: 22px; border: 1px solid #a9b2cc; background: #fff; margin-left: 8px; display: flex; justify-content: space-between; padding-left: 4px; line-height: 20px; font-size: 13px; }
.total { margin-left: auto; }

/* menus */
.menu { position: absolute; background: #f0f0f0; border: 1px solid #bfbfbf; box-shadow: 2px 3px 5px rgba(0, 0, 0, .35); color: #222; display: flex; flex-direction: column; }
.mi { position: relative; display: flex; align-items: flex-start; flex: none; }
.off { color: #8a8a8a; } .off svg { opacity: .5; }
.menu::before { content: ""; position: absolute; top: 2px; bottom: 2px; width: 1px; background: #dedede; box-shadow: 1px 0 #fff; }
.a .menu::before { left: 33px; } .b .menu::before { left: 26px; }
.a1 { left: 385px; top: 242px; width: 196px; height: 99px; padding-top: 3px; }
.a2 { left: 578px; top: 276px; width: 338px; height: 100px; padding-top: 3px; }
.a3 { left: 913px; top: 342px; width: 193px; height: 69px; padding-top: 3px; }
.a .mi { height: 31.300px; padding: 3px 0 0 6px; }
.a .mi span { margin: 7px 0 0 15px; line-height: 17px; }
.a1 .mi span { margin-top: 6px; }
.a .sub { position: absolute; right: 9px; top: 9px; width: 7px; height: 11px; }
.mark::after { content: ""; position: absolute; left: 2px; right: 2px; top: -1px; height: 31px; border: 3px solid #a50d1c; }
.a3 .mark::after { left: -1px; right: -1px; height: 36px; }
.b1 { left: 247px; top: 166px; width: 157px; height: 54px; padding-top: 3px; }
.b2 { left: 403px; top: 193px; width: 272px; height: 106px; padding-top: 3px; }
.b .mi { height: 25.200px; padding: 2px 0 0 5px; }
.b .mi span { margin: 5px 0 0 11px; line-height: 13px; }
.b1 .mi span { margin-top: 4px; }
.b .sub { position: absolute; right: 8px; top: 6px; width: 5px; height: 9px; }
.hover::before { content: ""; position: absolute; inset: -1px 1px 0 2px; border: 1px solid #9a9a9a; border-radius: 2px; background: linear-gradient(#ececec, #dedede); z-index: 0; }
.hover > * { position: relative; z-index: 1; } .b .hover .sub { position: absolute; }
.callout { position: absolute; left: 233px; top: 138px; width: 122px; height: 40px; border: 4px solid #f4502c; border-radius: 2px; }

.b .brand { width: 703px; padding-left: 24px; } .b .logo { margin-top: -55px; }
.b .title { font-size: 19.500px; line-height: 28px; margin: -5px 0 0 9px; }
.b .note { width: 261px; font-weight: bold; font-size: 11px; line-height: 13px; margin-top: 19px; color: #111; }
.org2 { width: 371px; display: flex; flex-direction: column; align-items: flex-start; font: 500 11px/14.300px Roboto, sans-serif; color: #4a4a4a; margin: 2px 0 0 1px; }
.b .head .clock { margin: 5px 0 0 -1px; height: 37px; width: 390px; border-radius: 8px 0 0 0; padding-left: 6px; border-bottom: 0; }
.b .cal { margin-top: 8px; }
.b .date { font-size: 12px; line-height: 14px; margin: 6px 0 0 5px; width: 271px; }
.b .tile { width: 32px; height: 29px; margin: 6px 3px 0 0; font-size: 18px; line-height: 30px; border-bottom-width: 2px; }

.dot { position: absolute; left: 1701px; width: 19px; height: 19px; border-radius: 50%; background: #4aa8ff; }
.d1 { top: 517px; } .d2 { top: 993px; }
</style>
